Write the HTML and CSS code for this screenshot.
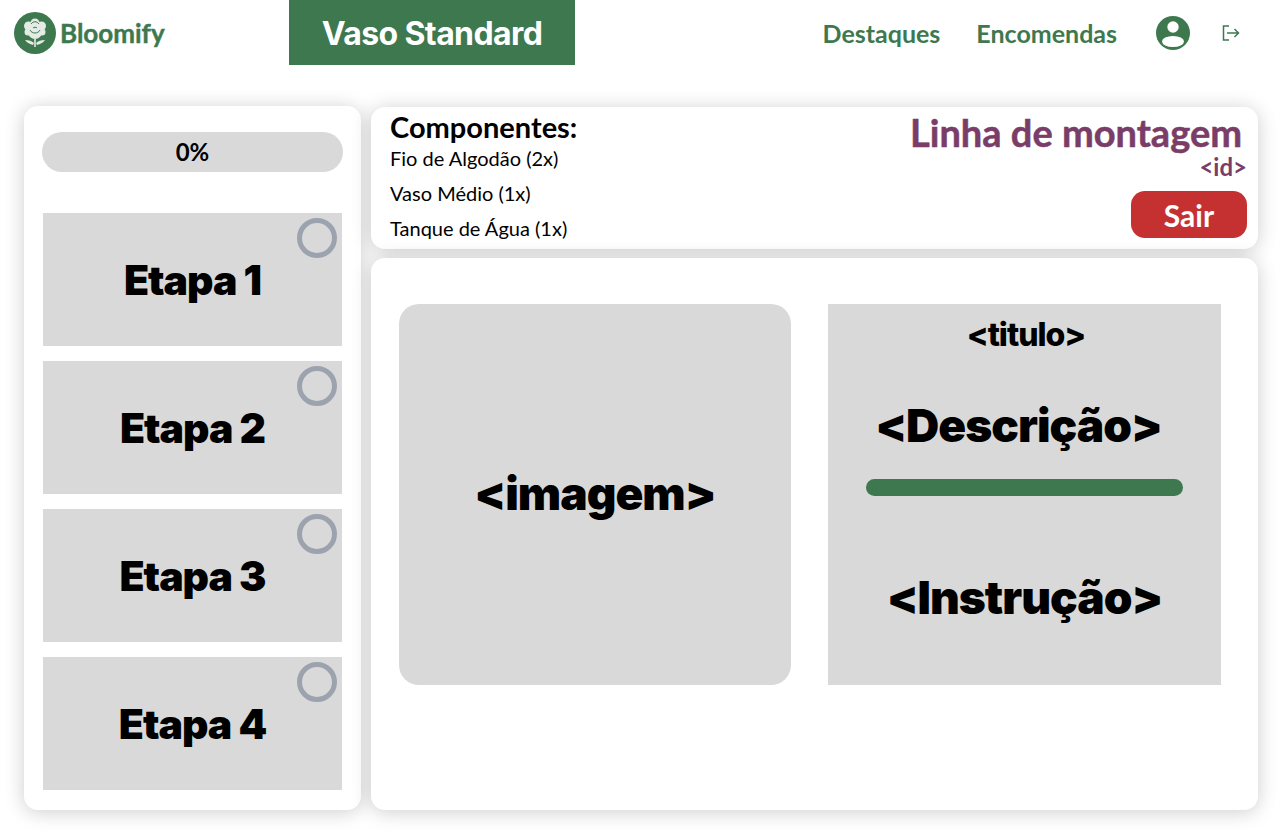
FILE: index.html
```html
<!DOCTYPE html>
<html lang="pt">
<head>
    <meta charset="UTF-8">
    <title>Linha de montagem</title>
    <link rel="stylesheet" href="styles.css">
</head>
<body>
    <header class="topbar">
        <a class="logo" href="#">
            <svg class="logo-icon" viewBox="0 0 42 42" width="42" height="42">
                <circle cx="21" cy="21" r="21" fill="#3e784f"/>
                <g fill="#e4ebe5">
                    <circle cx="21" cy="11" r="4.5"/>
                    <circle cx="14.5" cy="14" r="4.5"/>
                    <circle cx="27.5" cy="14" r="4.5"/>
                    <circle cx="14" cy="20" r="3.5"/>
                    <circle cx="28" cy="20" r="3.5"/>
                    <circle cx="21" cy="20" r="7"/>
                    <path d="M11 28c4 0 7 1 9 3l-1 2c-3-1-6-2-8-5zM31 28c-4 0-7 1-9 3l1 2c3-1 6-2 8-5z"/>
                    <rect x="20.2" y="27" width="1.6" height="8"/>
                </g>
                <g fill="none" stroke="#3e784f" stroke-width="1">
                    <path d="M17 12c2-3 6-3 8 0"/>
                    <path d="M16 18c2 4 8 4 10 0"/>
                    <path d="M19 16c1-1 3-1 4 0"/>
                </g>
            </svg>
            <span class="logo-text">Bloomify</span>
        </a>
        <div class="page-title">Vaso Standard</div>
        <nav class="nav">
            <a href="#">Destaques</a>
            <a href="#">Encomendas</a>
            <svg class="user-icon" viewBox="0 0 34 34" width="34" height="34">
                <circle cx="17" cy="17" r="17" fill="#3e784f"/>
                <circle cx="17" cy="11" r="5.7" fill="#fff"/>
                <ellipse cx="17" cy="25.5" rx="11" ry="5.5" fill="#fff"/>
            </svg>
            <svg class="logout-icon" viewBox="0 0 18 16" width="18" height="16" fill="none" stroke="#3e784f" stroke-width="1.5">
                <path d="M7 1H1.5v14H7"/>
                <path d="M5 8h11.5M12.5 4l4 4-4 4"/>
            </svg>
        </nav>
    </header>

    <main class="layout">
        <aside class="panel steps-panel">
            <div class="progress">0%</div>
            <div class="steps">
                <div class="step"><span class="step-check"></span>Etapa 1</div>
                <div class="step"><span class="step-check"></span>Etapa 2</div>
                <div class="step"><span class="step-check"></span>Etapa 3</div>
                <div class="step"><span class="step-check"></span>Etapa 4</div>
            </div>
        </aside>

        <div class="right-col">
            <section class="panel info-panel">
                <div class="components">
                    <h2>Componentes:</h2>
                    <p>Fio de Algodão (2x)</p>
                    <p>Vaso Médio (1x)</p>
                    <p>Tanque de Água (1x)</p>
                </div>
                <div class="line-info">
                    <h1>Linha de montagem</h1>
                    <span class="line-id">&lt;id&gt;</span>
                    <button class="exit-btn">Sair</button>
                </div>
            </section>

            <section class="panel work-panel">
                <div class="image-box">&lt;imagem&gt;</div>
                <div class="text-box">
                    <div class="box-title">&lt;titulo&gt;</div>
                    <div class="box-desc">&lt;Descrição&gt;</div>
                    <div class="box-bar"></div>
                    <div class="box-instr">&lt;Instrução&gt;</div>
                </div>
            </section>
        </div>
    </main>
</body>
</html>
```

FILE: styles.css
```css
* {
    box-sizing: border-box;
}
body {
    margin: 0;
    background: #fff;
    color: #000;
    font-family: "Lato", "Noto Sans", sans-serif;
}
a {
    text-decoration: none;
    color: inherit;
}

/* topo */
.topbar {
    display: flex;
    align-items: center;
    height: 65px;
}
.logo {
    display: flex;
    align-items: center;
    gap: 4px;
    width: 289px;
    padding-left: 14px;
    color: #3e784f;
}
.logo-text {
    font-size: 26px;
    font-weight: 700;
    -webkit-text-stroke: 0.4px #3e784f;
}
.page-title {
    width: 286px;
    height: 65px;
    line-height: 67px;
    background: #3e784f;
    color: #fff;
    font-family: "Inter", "Lato", sans-serif;
    font-size: 32px;
    font-weight: 700;
    letter-spacing: -0.6px;
    text-align: center;
}
.nav {
    display: flex;
    align-items: center;
    margin-left: auto;
    padding-right: 40px;
    color: #3e784f;
    font-size: 25px;
    font-weight: 700;
}
.nav a {
    margin-right: 36px;
}
.nav a:nth-child(2) {
    margin-right: 39px;
}
.logout-icon {
    margin-left: 32px;
}

/* layout */
.layout {
    display: grid;
    grid-template-columns: 337px 887px;
    gap: 10px;
    padding: 41px 0 22px 24px;
}
.panel {
    background: #fff;
    border-radius: 14px;
    box-shadow: 0 2px 20px rgba(0, 0, 0, 0.2);
}
.steps-panel {
    height: 704px;
    padding: 26px 18px;
}
.progress {
    height: 40px;
    line-height: 40px;
    border-radius: 20px;
    background: #d9d9d9;
    font-size: 24px;
    font-weight: 700;
    text-align: center;
}
.steps {
    display: flex;
    flex-direction: column;
    gap: 15px;
    margin: 41px 1px 0;
}
.step {
    position: relative;
    height: 133px;
    display: flex;
    align-items: center;
    justify-content: center;
    background: #d9d9d9;
    font-family: "Inter", "Lato", sans-serif;
    font-size: 41px;
    font-weight: 900;
    letter-spacing: -1px;
}
.step-check {
    position: absolute;
    top: 5px;
    right: 5px;
    width: 40px;
    height: 40px;
    border: 5px solid #9ca3af;
    border-radius: 50%;
}

/* coluna direita */
.right-col {
    display: flex;
    flex-direction: column;
    gap: 9px;
    padding-top: 1px;
}
.info-panel {
    display: flex;
    justify-content: space-between;
    height: 142px;
    padding: 5px 11px 0 19px;
}
.components h2 {
    margin: 0;
    font-size: 29px;
    font-weight: 700;
    line-height: 29px;
}
.components p {
    margin: 0;
    font-size: 20px;
    line-height: 35px;
}
.line-info {
    display: flex;
    flex-direction: column;
    align-items: flex-end;
}
.line-info h1 {
    margin: 0;
    color: #793d68;
    font-size: 38px;
    font-weight: 700;
    line-height: 40px;
    padding-right: 5px;
    -webkit-text-stroke: 0.5px #793d68;
}
.line-id {
    color: #793d68;
    font-size: 24px;
    font-weight: 700;
    line-height: 30px;
}
.exit-btn {
    width: 116px;
    height: 47px;
    margin-top: 9px;
    border: 0;
    border-radius: 14px;
    background: #c53030;
    color: #fff;
    font-family: inherit;
    font-size: 30px;
    font-weight: 700;
}
.work-panel {
    display: flex;
    gap: 37px;
    height: 552px;
    padding: 46px 0 0 28px;
    align-items: flex-start;
}
.image-box {
    display: flex;
    align-items: center;
    justify-content: center;
    width: 392px;
    height: 381px;
    padding-bottom: 4px;
    border-radius: 20px;
    background: #d9d9d9;
    font-family: "Inter", "Lato", sans-serif;
    font-size: 46px;
    font-weight: 900;
    letter-spacing: -1px;
}
.text-box {
    display: flex;
    flex-direction: column;
    align-items: center;
    width: 393px;
    height: 381px;
    background: #d9d9d9;
    font-family: "Inter", "Lato", sans-serif;
    font-weight: 900;
    letter-spacing: -1px;
}
.box-title {
    margin-top: 13px;
    margin-left: 3px;
    font-size: 32px;
    font-weight: 800;
    line-height: 36px;
}
.box-desc {
    margin-top: 42px;
    margin-right: 12px;
    font-size: 46px;
    line-height: 60px;
}
.box-bar {
    width: 317px;
    height: 17px;
    margin-top: 24px;
    border-radius: 9px;
    background: #3e784f;
}
.box-instr {
    margin-top: 71px;
    font-size: 46px;
    line-height: 60px;
}
```
